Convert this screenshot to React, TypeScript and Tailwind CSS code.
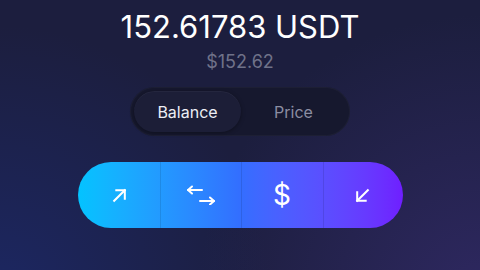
import React from "react";

function ArrowUpRight() {
  return (
    <svg width="17" height="17" viewBox="0 0 16 16" fill="none" stroke="white" strokeWidth="1.9" strokeLinecap="square">
      <path d="M3 13L13 3" />
      <path d="M5 3H13V11" />
    </svg>
  );
}

function ArrowDownLeft() {
  return (
    <svg width="17" height="17" viewBox="0 0 16 16" fill="none" stroke="white" strokeWidth="1.9" strokeLinecap="square">
      <path d="M13 3L3 13" />
      <path d="M3 5V13H11" />
    </svg>
  );
}

function Swap() {
  return (
    <svg width="30" height="20" viewBox="0 0 30 20" fill="none" stroke="white" strokeWidth="2" strokeLinecap="round" strokeLinejoin="round">
      <path d="M2 5H16" />
      <path d="M6 1.5L2 5L6 8.5" />
      <path d="M14 16H28" />
      <path d="M24 12.5L28 16L24 19.5" />
    </svg>
  );
}

export default function App() {
  return (
    <div
      className="w-[480px] h-[270px] overflow-hidden flex flex-col items-center"
      style={{
        background:
          "radial-gradient(circle at 0% 110%, #1c2762 0%, rgba(28,39,98,0) 48%), radial-gradient(circle at 100% 110%, #2e2860 0%, rgba(46,40,96,0) 50%), #1c1e3e",
        fontFamily: "Inter, 'Noto Sans', sans-serif",
      }}
    >
      <div className="pt-[8px] text-[31px] leading-[37px] text-white">152.61783 USDT</div>
      <div className="mt-[6px] text-[18px] leading-[21px] text-[#6f7289]">$152.62</div>
      <div className="mt-[15px] w-[220px] h-[49px] p-[4px] rounded-full bg-[#16182e] flex shadow-[inset_0_0_0_1px_rgba(255,255,255,0.03)]">
        <div className="w-[107px] h-full rounded-full bg-[#1c1e37] shadow-[0_1px_4px_rgba(0,0,0,0.35),inset_0_1px_0_rgba(255,255,255,0.04)] flex items-center justify-center text-[16px] text-[#eceef5]">
          Balance
        </div>
        <div className="flex-1 h-full flex items-center justify-center text-[16px] text-[#8b8da2]">Price</div>
      </div>
      <div className="mt-[26px] w-[325px] h-[66px] rounded-full overflow-hidden flex bg-gradient-to-r from-[#03c3ff] via-[#336eff] to-[#6f1eff]">
        <div className="w-[82px] h-full flex items-center justify-center pl-[2px]">
          <ArrowUpRight />
        </div>
        <div className="w-[81px] h-full flex items-center justify-center border-l border-black/10">
          <Swap />
        </div>
        <div className="w-[82px] h-full flex items-center justify-center border-l border-black/10 text-white text-[28px] font-normal">
          $
        </div>
        <div className="flex-1 h-full flex items-center justify-center border-l border-black/10 pr-[2px]">
          <ArrowDownLeft />
        </div>
      </div>
    </div>
  );
}
